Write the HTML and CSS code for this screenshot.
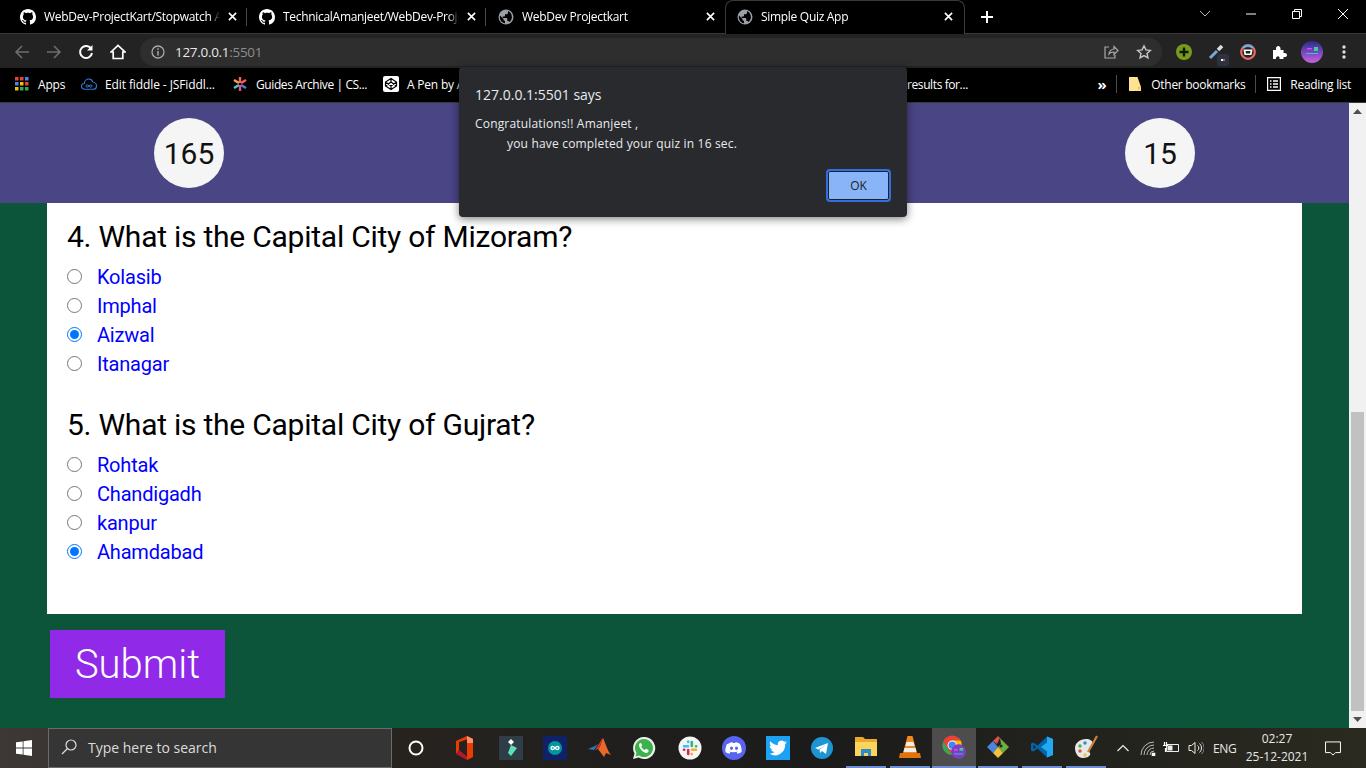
FILE: index.html
```html
<!DOCTYPE html>
<html lang="en">
<head>
<meta charset="UTF-8">
<meta name="viewport" content="width=device-width, initial-scale=1.0">
<title>Simple Quiz App</title>
<link rel="stylesheet" href="styles.css">
</head>
<body>
<svg class="defs" width="0" height="0">
    <symbol id="github" viewBox="0 0 16 16"><path fill="#fff" d="M8 0C3.58 0 0 3.58 0 8c0 3.54 2.29 6.53 5.47 7.59.4.07.55-.17.55-.38 0-.19-.01-.82-.01-1.49-2.01.37-2.53-.49-2.69-.94-.09-.23-.48-.94-.82-1.13-.28-.15-.68-.52-.01-.53.63-.01 1.08.58 1.23.82.72 1.21 1.87.87 2.33.66.07-.52.28-.87.51-1.07-1.78-.2-3.64-.89-3.64-3.95 0-.87.31-1.59.82-2.15-.08-.2-.36-1.02.08-2.12 0 0 .67-.21 2.2.82.64-.18 1.32-.27 2-.27.68 0 1.36.09 2 .27 1.53-1.04 2.2-.82 2.2-.82.44 1.1.16 1.92.08 2.12.51.56.82 1.27.82 2.15 0 3.07-1.87 3.75-3.65 3.95.29.25.54.73.54 1.48 0 1.07-.01 1.93-.01 2.2 0 .21.15.46.55.38A8.013 8.013 0 0016 8c0-4.42-3.58-8-8-8z"/></symbol>
    <symbol id="globe" viewBox="0 0 16 16"><circle cx="8" cy="8" r="7.5" fill="#9aa0a6"/><path fill="#000" d="M7 14.2C4 13.8 1.8 11.2 1.8 8c0-.5.1-1 .2-1.400L5.500 10v.8c0 .7.600 1.200 1.500 1.200zM11.400 12.900c-.2-.6-.7-1-1.400-1h-.7V9.800c0-.4-.3-.8-.8-.8H4.700V7.500h1.600c.4 0 .7-.3.7-.7V5.300h1.500c.8 0 1.500-.7 1.500-1.500v-1.800c2.300 .9 3.900 3.200 3.900 6 0 2-.9 3.700-2.500 4.900z"/></symbol>
    <symbol id="close" viewBox="0 0 10 10"><path stroke="#fff" stroke-width="1.800" d="M1 1l8 8M9 1l-8 8"/></symbol>
</svg>

<div class="browser">
    <div class="tabstrip">
        <div class="tab">
            <svg class="favicon"><use href="#github"/></svg>
            <span class="tab-title">WebDev-ProjectKart/Stopwatch A</span>
            <svg class="tab-close"><use href="#close"/></svg>
        </div>
        <div class="tab">
            <svg class="favicon"><use href="#github"/></svg>
            <span class="tab-title">TechnicalAmanjeet/WebDev-Projects</span>
            <svg class="tab-close"><use href="#close"/></svg>
        </div>
        <div class="tab tab-last">
            <svg class="favicon"><use href="#globe"/></svg>
            <span class="tab-title">WebDev Projectkart</span>
            <svg class="tab-close"><use href="#close"/></svg>
        </div>
        <div class="tab tab-active">
            <svg class="favicon"><use href="#globe"/></svg>
            <span class="tab-title">Simple Quiz App</span>
            <svg class="tab-close"><use href="#close"/></svg>
        </div>
        <svg class="new-tab" viewBox="0 0 12 12"><path stroke="#fff" stroke-width="2" d="M6 0v12M0 6h12"/></svg>
        <div class="window-controls">
            <svg class="win-btn" viewBox="0 0 46 16"><path fill="none" stroke="#bbb" d="M18 5l5 5 5-5"/></svg>
            <svg class="win-btn" viewBox="0 0 46 16"><path stroke="#fff" d="M18 8h10"/></svg>
            <svg class="win-btn" viewBox="0 0 46 16"><path fill="none" stroke="#fff" d="M18.500 5.500h7v7h-7zM20.500 5.500v-2h7v7h-2"/></svg>
            <svg class="win-btn" viewBox="0 0 46 16"><path stroke="#fff" d="M18 3l10 10M28 3l-10 10"/></svg>
        </div>
    </div>

    <div class="toolbar">
        <svg class="tool-icon" viewBox="0 0 16 16"><path fill="none" stroke="#6e6e6e" stroke-width="1.600" d="M15 8H2M8 2L2 8l6 6"/></svg>
        <svg class="tool-icon" viewBox="0 0 16 16"><path fill="none" stroke="#6e6e6e" stroke-width="1.600" d="M1 8h13M8 2l6 6-6 6"/></svg>
        <svg class="tool-icon" viewBox="0 0 16 16"><path fill="none" stroke="#fff" stroke-width="2" d="M13.300 5A6 6 0 1 0 14 9"/><path fill="#fff" d="M14.500 1v5.500H9z"/></svg>
        <svg class="tool-icon" viewBox="0 0 16 16"><path fill="none" stroke="#fff" stroke-width="1.700" d="M1 8l7-6.500L15 8h-2.200v6.500H3.200V8z"/></svg>
        <div class="omnibox">
            <svg class="omni-info" viewBox="0 0 14 14"><circle cx="7" cy="7" r="6" fill="none" stroke="#a8a8a8" stroke-width="1.300"/><path stroke="#a8a8a8" stroke-width="1.500" d="M7 6v4.500M7 3.200v1.500"/></svg>
            <span class="omni-url">127.0.0.1<span class="omni-port">:5501</span></span>
            <svg class="omni-share" viewBox="0 0 16 16"><path fill="none" stroke="#a8a8a8" stroke-width="1.200" d="M6 3H2v11h10v-3M6 10c0-3 3-5 5-5V2.500L15 6.500 11 10.500V8c-2 0-4 .5-5 2z"/></svg>
            <svg class="omni-star" viewBox="0 0 16 16"><path fill="none" stroke="#c8c8c8" stroke-width="1.400" d="M8 1.800l1.900 4.100 4.400.5-3.300 3 .9 4.400L8 11.600l-3.900 2.200.9-4.400-3.300-3 4.400-.5z"/></svg>
        </div>
        <div class="extensions">
            <svg class="ext" viewBox="0 0 16 16"><circle cx="8" cy="8" r="8" fill="#7a9a1e"/><path stroke="#0c1a06" stroke-width="2.400" d="M8 3.500v9M3.500 8h9"/></svg>
            <div class="ext ext-picker">
                <svg viewBox="0 0 16 16"><path stroke="#7ba6d8" stroke-width="3" d="M2 14l7-7"/><path stroke="#ddd" stroke-width="3.500" d="M10 6l4-4"/></svg>
                <span class="ext-badge"></span>
            </div>
            <svg class="ext" viewBox="0 0 16 16"><circle cx="8" cy="8" r="6.800" fill="none" stroke="#e86a6a" stroke-width="2.200"/><path fill="none" stroke="#59b7e6" stroke-width="2.200" d="M3 4a6.800 6.800 0 0 1 10 0"/><path fill="#fff" d="M3.500 5.500h9l-1 5.500h-7z"/><path fill="#222" d="M5.500 7h5l-.5 2.500h-4z"/></svg>
            <svg class="ext" viewBox="0 0 16 16"><path fill="#fff" d="M1 6h3c-.5-3 1-4 2.200-4S9 3 8.500 6h3v3c3-.5 3.500 1 3.500 2s-.5 2.500-3.500 2v2h-4c.5-2-.5-2.800-1.500-2.800S3.500 13 4 15H1z"/></svg>
            <svg class="ext ext-avatar" viewBox="0 0 22 22"><defs><linearGradient id="avatar" x1="0" y1="0" x2="0" y2="1"><stop offset="0" stop-color="#2c2a8f"/><stop offset="1" stop-color="#c463e0"/></linearGradient></defs><circle cx="11" cy="11" r="11" fill="url(#avatar)"/><path fill="#34d399" d="M13 6h4v4h-4z"/><path fill="#d946ef" d="M6 7h5v1.500H6z"/><path fill="#38bdf8" d="M5 12h12v1H5z"/></svg>
            <svg class="ext" viewBox="0 0 16 16"><g fill="#ddd"><circle cx="8" cy="3" r="1.700"/><circle cx="8" cy="8" r="1.700"/><circle cx="8" cy="13" r="1.700"/></g></svg>
        </div>
    </div>

    <div class="bookmarks">
        <div class="bookmark bm-apps">
            <svg class="bm-icon" viewBox="0 0 14 14">
                <g fill="#ea4335"><rect width="3.500" height="3.500"/><rect x="5" width="3.500" height="3.500"/></g><rect x="10" width="3.500" height="3.500" fill="#4285f4"/>
                <rect y="5" width="3.500" height="3.500" fill="#4285f4"/><rect x="5" y="5" width="3.500" height="3.500" fill="#fbbc05"/><rect x="10" y="5" width="3.500" height="3.500" fill="#ea4335"/>
                <rect y="10" width="3.500" height="3.500" fill="#fbbc05"/><rect x="5" y="10" width="3.500" height="3.500" fill="#34a853"/><rect x="10" y="10" width="3.500" height="3.500" fill="#34a853"/>
            </svg>
            <span>Apps</span>
        </div>
        <div class="bookmark bm-fiddle">
            <svg class="bm-icon bm-cloud" viewBox="0 0 16 12"><path fill="none" stroke="#2f7fd1" stroke-width="1.100" d="M4 11.300C1 11.300.5 9.500.5 8.300S1.500 5.500 3.300 5.500C3.500 3 5.500 1 7.800 1c2 0 3.500 1.300 4 3 2 .2 3.700 2 3.700 3.800 0 2-1.300 3.500-3.500 3.500z"/><path fill="none" stroke="#2f7fd1" d="M8 8c-1-1.500-3-1.500-3 0s2 1.500 3 0 3-1.500 3 0-2 1.500-3 0z"/></svg>
            <span>Edit fiddle - JSFiddl...</span>
        </div>
        <div class="bookmark bm-guides">
            <svg class="bm-icon" viewBox="0 0 14 14"><g stroke-width="2.400"><path stroke="#ff5e5b" d="M7 0v6"/><path stroke="#ff9d5c" d="M1 3l5 3"/><path stroke="#ff5e5b" d="M13 3L8 6"/><path stroke="#50c8c6" d="M1 11l5-3"/><path stroke="#5b7bd5" d="M13 11L8 8"/><path stroke="#e6518c" d="M7 14V8"/></g></svg>
            <span>Guides Archive | CS...</span>
        </div>
        <div class="bookmark bm-pen">
            <svg class="bm-icon bm-codepen" viewBox="0 0 16 16"><rect width="16" height="16" rx="2" fill="#fff"/><path fill="none" stroke="#000" stroke-width="1.200" d="M8 2.500l5.500 3.600v3.800L8 13.500 2.500 9.900V6.100zM8 6l-5.500 3.900M8 6l5.500 3.900M8 10L2.500 6.100M8 10l5.500-3.900M8 2.500V6M8 10v3.500"/></svg>
            <span>A Pen by A</span>
        </div>
        <div class="bookmark bm-results"><span>results for...</span></div>
        <div class="bm-right">
            <span class="bm-more">»</span>
            <span class="bm-sep"></span>
            <div class="bookmark bm-other">
                <svg class="bm-folder" viewBox="0 0 12 14"><path fill="#fde293" d="M0 0h8.500L12 10v4H0z"/><path fill="#f0c64c" d="M9 10h3l-3 4z"/></svg>
                <span>Other bookmarks</span>
            </div>
            <span class="bm-sep"></span>
            <div class="bookmark bm-reading">
                <svg class="bm-icon" viewBox="0 0 14 14"><path fill="none" stroke="#fff" stroke-width="1.200" d="M.6.6h12.800v12.800H.6z"/><path stroke="#fff" stroke-width="1.400" d="M3 4h1.500M6 4h5M3 7h1.500M6 7h5M3 10h1.500M6 10h5"/></svg>
                <span>Reading list</span>
            </div>
        </div>
    </div>

    <div class="viewport">
        <div class="page">
            <header class="quiz-header">
                <div class="counter">165</div>
                <div class="counter">15</div>
            </header>
            <form class="quiz-form">
                <div class="quiz-card">
                    <div class="question">
                        <h2>4. What is the Capital City of Mizoram?</h2>
                        <label class="option"><input type="radio" name="q4"><span>Kolasib</span></label>
                        <label class="option"><input type="radio" name="q4"><span>Imphal</span></label>
                        <label class="option"><input type="radio" name="q4" checked><span>Aizwal</span></label>
                        <label class="option"><input type="radio" name="q4"><span>Itanagar</span></label>
                    </div>
                    <div class="question">
                        <h2>5. What is the Capital City of Gujrat?</h2>
                        <label class="option"><input type="radio" name="q5"><span>Rohtak</span></label>
                        <label class="option"><input type="radio" name="q5"><span>Chandigadh</span></label>
                        <label class="option"><input type="radio" name="q5"><span>kanpur</span></label>
                        <label class="option"><input type="radio" name="q5" checked><span>Ahamdabad</span></label>
                    </div>
                </div>
                <button type="button" class="submit-btn">Submit</button>
            </form>
        </div>
        <div class="scrollbar">
            <svg class="scroll-arrow" viewBox="0 0 17 17"><path fill="#505050" d="M8.500 6l4.500 5H4z"/></svg>
            <div class="scroll-track"><div class="scroll-thumb"></div></div>
            <svg class="scroll-arrow" viewBox="0 0 17 17"><path fill="#505050" d="M8.500 11L4 6h9z"/></svg>
        </div>
    </div>

    <div class="taskbar">
        <svg class="start" viewBox="0 0 16 16"><path fill="#fff" d="M0 2.300l6.700-.9v6.200H0zM7.500 1.300L16 0v7.600H7.500zM0 8.400h6.700v6.200L0 13.700zM7.500 8.400H16V16l-8.500-1.300z"/></svg>
        <div class="search">
            <svg class="search-icon" viewBox="0 0 16 16"><circle cx="10" cy="6" r="5" fill="none" stroke="#ddd" stroke-width="1.200"/><path stroke="#ddd" stroke-width="1.300" d="M6.500 9.500L1 15"/></svg>
            <span>Type here to search</span>
        </div>
        <div class="task-icons">
            <div class="task cortana"><svg viewBox="0 0 16 16"><circle cx="8" cy="8" r="6.500" fill="none" stroke="#fff" stroke-width="2"/></svg></div>
            <div class="task"><svg viewBox="0 0 20 24"><path fill="#eb3c00" d="M2 5l11-5 6 3v18l-6 3V3.500L5 6v8L2 18z"/><path fill="#ff8f6b" d="M13 0l6 3v4h-6z"/><path fill="#b5172f" d="M2 18l3-4 8 6.500V24z"/></svg></div>
            <div class="task gap-3"><svg viewBox="0 0 24 24"><rect width="24" height="24" fill="#2f3e46"/><path fill="#fff" d="M12 3l3 3-3 3-3-3z"/><path fill="#5de0b8" d="M12 9l6 3-6 8-3-3z"/></svg></div>
            <div class="task"><svg viewBox="0 0 24 24"><rect width="24" height="24" fill="#0f2167"/><circle cx="12" cy="12" r="7" fill="#00979d"/><path fill="none" stroke="#fff" stroke-width="1.300" d="M12 12c-1.500-2-4-2-4 0s2.500 2 4 0 4-2 4 0-2.500 2-4 0z"/></svg></div>
            <div class="task gap-1"><svg viewBox="0 0 24 24"><path fill="#2a78c2" d="M0 13l7-3 3-2-4 6z"/><path fill="#e8692a" d="M15 2c2 4 5 14 8 17l-5-2-2 4-6-8c3-2 3-8 5-11z"/><path fill="#c9391f" d="M15 2c-2 3-2 9-5 11l-3 1 3-5c2-2 3-6 5-7z"/></svg></div>
            <div class="task"><svg viewBox="0 0 24 24"><path fill="#eee" d="M12 1a11 11 0 0 0-9.500 16.500L1 23l5.700-1.500A11 11 0 1 0 12 1z"/><path fill="#3cb34a" d="M12 3a9 9 0 0 0-7.500 14l-1 3.500 3.500-1A9 9 0 1 0 12 3z"/><path fill="#fff" d="M9 7l-1.500.5C6.500 9 7 11 9 13.500s4.500 4 6 3.500l1.500-1.500v-1.500l-2.500-1.200-1.200 1.200c-1.500-.5-3-2-3.600-3.600l1-1.200z"/></svg></div>
            <div class="task gap-2"><svg viewBox="0 0 24 24"><circle cx="12" cy="12" r="11.500" fill="#f5f5f5"/><g stroke-width="2.600" stroke-linecap="round"><path stroke="#36c5f0" d="M6 10.200h4M10.200 5.500v.5"/><path stroke="#2eb67d" d="M13.800 6v4M18 10.200h.2"/><path stroke="#ecb22e" d="M14 13.800h4M13.800 18v.2"/><path stroke="#e01e5a" d="M10.200 14v4M6 13.800h.2"/></g></svg></div>
            <div class="task"><svg viewBox="0 0 24 24"><circle cx="12" cy="12" r="12" fill="#5865f2"/><path fill="#fff" d="M6 8c2-1.500 4-1.700 4.500-1.700l.4.800h2.200l.4-.8c.5 0 2.500.2 4.500 1.700 1.300 2.700 1.800 5.300 1.600 8-1.500 1.200-3.200 1.600-4 1.700l-1-1.400 1.700-1c-2.700 1.300-6.900 1.300-9.600 0l1.700 1-1 1.400c-.8-.1-2.500-.5-4-1.700-.2-2.700.3-5.300 1.600-8z"/><ellipse cx="9.500" cy="12.300" rx="1.500" ry="1.800" fill="#5865f2"/><ellipse cx="14.500" cy="12.300" rx="1.500" ry="1.800" fill="#5865f2"/></svg></div>
            <div class="task"><svg viewBox="0 0 24 24"><rect width="24" height="24" fill="#1da1f2"/><path fill="#fff" d="M21 6.300c-.7.300-1.400.5-2.100.6.800-.5 1.300-1.200 1.600-2-.7.400-1.500.7-2.300.9a3.700 3.700 0 0 0-6.300 3.400C8.800 9 6.100 7.500 4.300 5.300c-1 1.700-.5 3.800 1.100 4.900-.6 0-1.200-.2-1.700-.5 0 1.800 1.300 3.300 3 3.700-.5.100-1.100.2-1.700.1.500 1.500 1.900 2.500 3.500 2.600A7.500 7.500 0 0 1 3 17.600 10.500 10.500 0 0 0 19.200 8.300c.7-.5 1.300-1.200 1.800-2z"/></svg></div>
            <div class="task"><svg viewBox="0 0 24 24"><circle cx="12" cy="12" r="11" fill="#1f94d2"/><path fill="#fff" d="M5 12l13-5-2 11-4-3-2 2-.5-3.500L16 9l-7.500 4.500z"/></svg></div>
            <div class="task running"><svg viewBox="0 0 24 24"><path fill="#e8a92c" d="M1 2h8l2 2h12v17H1z"/><path fill="#fbd45c" d="M1 7h22v14H1z"/><path fill="#2b8bd1" d="M7 14h10v7h-3v-3h-4v3H7z"/></svg></div>
            <div class="task running"><svg viewBox="0 0 24 24"><path fill="#f08a1d" d="M9.500 1h5l5 19H4.500z"/><path fill="#eee" d="M8.500 7h7l1 4h-9zM6.500 13h11l1 4H5.500z"/><path fill="#e0720f" d="M2 18h20l1 5H1z"/></svg></div>
            <div class="task running task-active"><svg viewBox="0 0 26 26"><circle cx="11" cy="11" r="10.500" fill="#ea4335"/><path fill="#34a853" d="M1.500 7L7 16l4 5.500C5 21.500.5 16.800.5 11c0-1.500.4-2.800 1-4z"/><path fill="#fbbc05" d="M11 6h9.200c.8 1.500 1.300 3.200 1.300 5 0 5.500-4.500 10.500-10.500 10.500l5-9z"/><circle cx="11" cy="11" r="5" fill="#fff"/><circle cx="11" cy="11" r="4" fill="#4285f4"/><circle cx="18" cy="18" r="8" fill="#7c3fbf"/><path fill="#34d399" d="M19 14h4v3h-4z"/><path fill="#d946ef" d="M13 15h4v2h-4z"/><path fill="#38bdf8" d="M13 20h10v1H13z"/></svg></div>
            <div class="task running"><svg viewBox="0 0 24 24"><path fill="#4a86e0" d="M1 12l6-6 5 6-5 6z"/><path fill="#e0514b" d="M7 6l5-5 2 2-3 6z"/><path fill="#6fae3e" d="M14 3l9 9-6 6-5-6 3-3z"/><path fill="#f0c43c" d="M7 18l5-6 5 6-5 5z"/><circle cx="15" cy="11" r="1.500" fill="#222"/></svg></div>
            <div class="task running"><svg viewBox="0 0 24 24"><path fill="#0065a9" d="M17 1.500L7.500 10.500 3.500 7.500 1 8.500v7l2.500 1 4-3 9.500 9 6-2.500V4z"/><path fill="#23a9f2" d="M17 1.500L23 4v16l-6 2.500zM17 7.500L11 12l6 4.500z"/><path fill="#1a1a1a" d="M3.500 10v4L6 12z"/></svg></div>
            <div class="task running"><svg viewBox="0 0 24 24"><path fill="#e8e8e8" d="M1 13c0-5 5-9 11-9 4 0 7 2 7 5s-4 3-4 6 2 3 1 5-4 3-7 3c-5 0-8-5-8-10z"/><circle cx="6" cy="11" r="1.700" fill="#4caf50"/><circle cx="11" cy="8" r="1.700" fill="#2b8bd1"/><circle cx="6" cy="16" r="1.700" fill="#e0514b"/><circle cx="11" cy="20" r="1.700" fill="#f0c43c"/><path stroke="#c8843c" stroke-width="2.200" d="M23 1L14 17"/></svg></div>
        </div>
        <div class="tray">
            <svg class="tray-icon tray-chevron" viewBox="0 0 14 14"><path fill="none" stroke="#eee" stroke-width="1.200" d="M1.500 10L7 4.500l5.500 5.500"/></svg>
            <svg class="tray-icon tray-wifi" viewBox="0 0 16 16"><g fill="none" stroke="#bbb"><path d="M1 15a13 13 0 0 1 13-13M4 15a10 10 0 0 1 10-10M7 15a7 7 0 0 1 7-7M10 15a4 4 0 0 1 4-4"/></g><path stroke="#fff" stroke-width="1.600" d="M12.500 13.500h2v1.800h-2z"/></svg>
            <svg class="tray-icon tray-battery" viewBox="0 0 16 16"><path fill="none" stroke="#eee" d="M3.500 4.500h12v7h-12z"/><path fill="#eee" d="M4.500 5.500h5v5h-5z"/><path stroke="#fff" stroke-width="1.200" d="M1.500 2v3M3.500 2v3M0 5.500h5M2.500 8v4"/></svg>
            <svg class="tray-icon tray-sound" viewBox="0 0 16 16"><path fill="none" stroke="#eee" d="M1 5.500h2.500L7 2.500v11l-3.500-3H1zM9.500 5.500a3 3 0 0 1 0 5M11.500 3.500a6 6 0 0 1 0 9"/><path fill="none" stroke="#888" d="M13.500 2a8 8 0 0 1 0 12"/></svg>
            <span class="tray-lang">ENG</span>
            <div class="tray-clock"><span>02:27</span><span>25-12-2021</span></div>
            <svg class="tray-notify" viewBox="0 0 18 16"><path fill="none" stroke="#fff" stroke-width="1.100" d="M.6.6h16.800v12h-5.500l-2.900 2.800-2.900-2.800H.6z"/></svg>
        </div>
    </div>
</div>

<div class="alert">
    <div class="alert-title">127.0.0.1:5501 says</div>
    <div class="alert-line">Congratulations!! Amanjeet ,</div>
    <div class="alert-line alert-indent">you have completed your quiz in 16 sec.</div>
    <div class="alert-actions"><button type="button" class="alert-ok">OK</button></div>
</div>
</body>
</html>
```

FILE: styles.css
```css
* {
    box-sizing: border-box;
}
html, body {
    margin: 0;
    padding: 0;
    height: 100%;
    overflow: hidden;
}
body {
    font-family: 'Open Sans', 'Noto Sans', sans-serif;
    background-color: #000;
}
.defs {
    display: block;
    height: 0;
}
svg {
    display: block;
    flex: none;
}
.browser {
    display: flex;
    flex-direction: column;
    height: 768px;
}

/* tab strip */
.tabstrip {
    display: flex;
    align-items: flex-start;
    height: 34px;
    flex: none;
    background-color: #000;
    border-bottom: 1px solid #3a3a3a;
    padding-left: 8px;
    color: #fff;
    font-size: 12px;
}
.tab {
    display: flex;
    align-items: center;
    width: 239px;
    height: 33px;
    padding: 0 10px 0 12px;
    position: relative;
}
.tab::after {
    content: "";
    position: absolute;
    right: 0;
    top: 8px;
    height: 18px;
    width: 1px;
    background-color: #4a4a4a;
}
.tab-last::after,
.tab-active::after {
    display: none;
}
.tab-active {
    width: 240px;
    height: 34px;
    background-color: #000;
    border: 1px solid #3a3a3a;
    border-bottom: 0;
    border-radius: 8px 8px 0 0;
    padding: 0 11px 2px 11px;
}
.favicon {
    width: 16px;
    height: 16px;
}
.tab-title {
    flex: 1;
    margin-left: 8px;
    white-space: nowrap;
    overflow: hidden;
    letter-spacing: -0.3px;
    -webkit-mask-image: linear-gradient(to right, #000 94%, transparent);
    mask-image: linear-gradient(to right, #000 94%, transparent);
}
.tab-close {
    width: 9px;
    height: 9px;
    margin-left: 8px;
}
.new-tab {
    width: 12px;
    height: 12px;
    margin: 11px 0 0 16px;
}
.window-controls {
    display: flex;
    margin-left: auto;
}
.win-btn {
    width: 46px;
    height: 16px;
    margin-top: 6px;
}

/* address bar */
.toolbar {
    display: flex;
    align-items: center;
    height: 34px;
    flex: none;
    background-color: #232323;
    padding: 2px 0 0 14px;
}
.tool-icon {
    width: 16px;
    height: 16px;
    margin-right: 16px;
}
.omnibox {
    display: flex;
    align-items: center;
    width: 1022px;
    height: 28px;
    margin-left: -2px;
    background-color: #2e2e2e;
    border-radius: 14px;
    padding: 0 10px 0 11px;
    color: #fff;
    font-size: 13.500px;
}
.omni-info {
    width: 14px;
    height: 14px;
}
.omni-url {
    margin-left: 10px;
    flex: 1;
    color: #e8e8e8;
    letter-spacing: -0.3px;
}
.omni-port {
    color: #8c8c8c;
}
.omni-share {
    width: 16px;
    height: 16px;
    margin-right: 17px;
}
.omni-star {
    width: 16px;
    height: 16px;
}
.extensions {
    display: flex;
    align-items: center;
    margin-left: 14px;
    gap: 16px;
}
.ext {
    width: 16px;
    height: 16px;
}
.ext-picker {
    position: relative;
}
.ext-picker svg {
    width: 16px;
    height: 16px;
}
.ext-badge {
    position: absolute;
    right: -5px;
    bottom: -6px;
    display: flex;
    justify-content: center;
    align-items: center;
    width: 12px;
    height: 12px;
    border-radius: 2px;
    background-color: #2a3340;
}
.ext-badge::after {
    content: "";
    width: 4px;
    height: 2px;
    background: linear-gradient(to right, #fff 50%, #e05050 50%);
}
.ext-avatar {
    width: 22px;
    height: 22px;
    margin: 0 -3px;
}

/* bookmarks bar */
.bookmarks {
    display: flex;
    align-items: center;
    height: 35px;
    flex: none;
    background-color: #000;
    color: #fff;
    font-size: 12px;
    letter-spacing: -0.2px;
    white-space: nowrap;
    border-bottom: 1px solid #3a3a3a;
    padding: 0 0 2px 15px;
}
.bookmark {
    display: flex;
    align-items: center;
}
.bm-icon {
    width: 14px;
    height: 14px;
    margin-right: 9px;
}
.bm-cloud {
    width: 16px;
    margin-right: 8px;
}
.bm-codepen {
    width: 16px;
    height: 16px;
    margin-right: 8px;
}
.bm-apps { width: 66px; }
.bm-fiddle { width: 152px; letter-spacing: -0.1px; }
.bm-guides { width: 150px; letter-spacing: -0.4px; }
.bm-pen { width: 76px; overflow: hidden; }
.bm-results { margin-left: 448px; letter-spacing: -0.4px; }
.bm-right {
    display: flex;
    align-items: center;
    margin-left: auto;
    padding-right: 15px;
    letter-spacing: -0.3px;
}
.bm-more {
    font-size: 15px;
    font-weight: 700;
    margin-right: 10px;
}
.bm-sep {
    width: 1px;
    height: 18px;
    background-color: #4a4a4a;
}
.bm-other {
    margin: 0 10px 0 12px;
}
.bm-folder {
    width: 12px;
    height: 14px;
    margin-right: 10px;
}
.bm-reading {
    margin-left: 11px;
}

/* page */
.viewport {
    display: flex;
    flex: 1;
    min-height: 0;
}
.page {
    flex: 1;
    background-color: #0c553b;
    font-family: Roboto, sans-serif;
}
.quiz-header {
    display: flex;
    justify-content: space-between;
    align-items: center;
    height: 100px;
    padding: 0 154px;
    background-color: #4a4585;
}
.counter {
    display: flex;
    justify-content: center;
    align-items: center;
    width: 70px;
    height: 70px;
    border-radius: 50%;
    background-color: #f5f5f5;
    font-size: 30px;
    color: #111;
}
.quiz-form {
    padding: 0 47px;
}
.quiz-card {
    height: 411px;
    background-color: #fff;
    padding: 14px 20px 0;
}
.question {
    margin-bottom: 27px;
}
.question h2 {
    margin: 0 0 5px;
    font-size: 30px;
    line-height: 40px;
    font-weight: 400;
    letter-spacing: -0.24px;
    color: #000;
}
.option {
    display: flex;
    align-items: center;
    height: 29px;
    font-size: 20px;
    letter-spacing: -0.2px;
    color: #0000ff;
}
.option input {
    width: 15px;
    height: 15px;
    margin: 0 15px 0 0;
}
.submit-btn {
    display: block;
    width: 175px;
    height: 68px;
    margin: 16px 0 0 3px;
    border: 0;
    background-color: #9029e8;
    color: #fff;
    font-family: Roboto, sans-serif;
    font-size: 40px;
    font-weight: 300;
}

/* scrollbar */
.scrollbar {
    display: flex;
    flex-direction: column;
    width: 17px;
    flex: none;
    background-color: #f1f1f1;
}
.scroll-arrow {
    width: 17px;
    height: 17px;
}
.scroll-track {
    flex: 1;
    padding: 292px 2px 0;
}
.scroll-thumb {
    height: 299px;
    background-color: #c1c1c1;
}

/* taskbar */
.taskbar {
    display: flex;
    align-items: center;
    height: 40px;
    flex: none;
    background: linear-gradient(to right, #3d3835 0, #26231f 30%, #1b1b1b 60%, #2a2a20 100%);
    color: #e8e8e8;
}
.start {
    width: 16px;
    height: 16px;
    margin: 0 16px;
}
.search {
    display: flex;
    align-items: center;
    width: 344px;
    height: 40px;
    padding: 0 0 2px 12px;
    background-color: #353535;
    border: 1px solid #6b6b6b;
    font-size: 14px;
    color: #dcdcdc;
}
.search-icon {
    width: 16px;
    height: 16px;
    margin-right: 11px;
}
.task-icons {
    display: flex;
    margin-left: 2px;
}
.task {
    display: flex;
    justify-content: center;
    align-items: center;
    width: 44px;
    height: 40px;
}
.task svg {
    width: 24px;
    height: 24px;
}
.cortana {
    margin-right: 4px;
}
.cortana svg {
    width: 16px;
    height: 16px;
}
.gap-1 { margin-left: 1px; }
.gap-2 { margin-left: 2px; }
.gap-3 { margin-left: 3px; }
.running {
    border-bottom: 2px solid #6d8ed0;
    margin: 0 2px;
    width: 40px;
}
.task-active {
    width: 44px;
    margin: 0;
    background-color: #4d4d4d;
}
.tray {
    display: flex;
    align-items: center;
    flex: 1;
    padding-left: 8px;
    font-size: 12px;
}
.tray-icon {
    width: 16px;
    height: 16px;
}
.tray-chevron {
    width: 14px;
    height: 14px;
}
.tray-wifi { margin-left: 10px; }
.tray-battery { margin-left: 7px; }
.tray-sound { margin-left: 9px; }
.tray-lang {
    margin-left: 9px;
    letter-spacing: -0.3px;
}
.tray-clock {
    display: flex;
    flex-direction: column;
    align-items: center;
    width: 57px;
    margin-left: 12px;
    font-size: 12px;
    line-height: 18px;
    white-space: nowrap;
}
.tray-notify {
    width: 16px;
    height: 15px;
    margin-left: 19px;
}

/* javascript alert, lies over the page */
.alert {
    position: absolute;
    left: 459px;
    top: 67px;
    width: 448px;
    height: 150px;
    background-color: #292a2d;
    border-radius: 4px;
    box-shadow: 0 2px 8px rgba(0, 0, 0, 0.5);
    padding: 18px 16px 0;
    color: #e8eaed;
    font-size: 12px;
}
.alert-title {
    font-size: 14px;
    line-height: 20px;
    margin-bottom: 9px;
}
.alert-line {
    line-height: 20px;
    letter-spacing: 0.18px;
}
.alert-indent {
    padding-left: 32px;
}
.alert-actions {
    display: flex;
    justify-content: flex-end;
    margin-top: 15px;
}
.alert-ok {
    width: 65px;
    height: 33px;
    background-color: #8ab4f8;
    border: 2px solid #2f6fe0;
    outline: 1px solid #202124;
    outline-offset: -3px;
    border-radius: 4px;
    color: #202124;
    font-family: inherit;
    font-size: 12px;
}
```
